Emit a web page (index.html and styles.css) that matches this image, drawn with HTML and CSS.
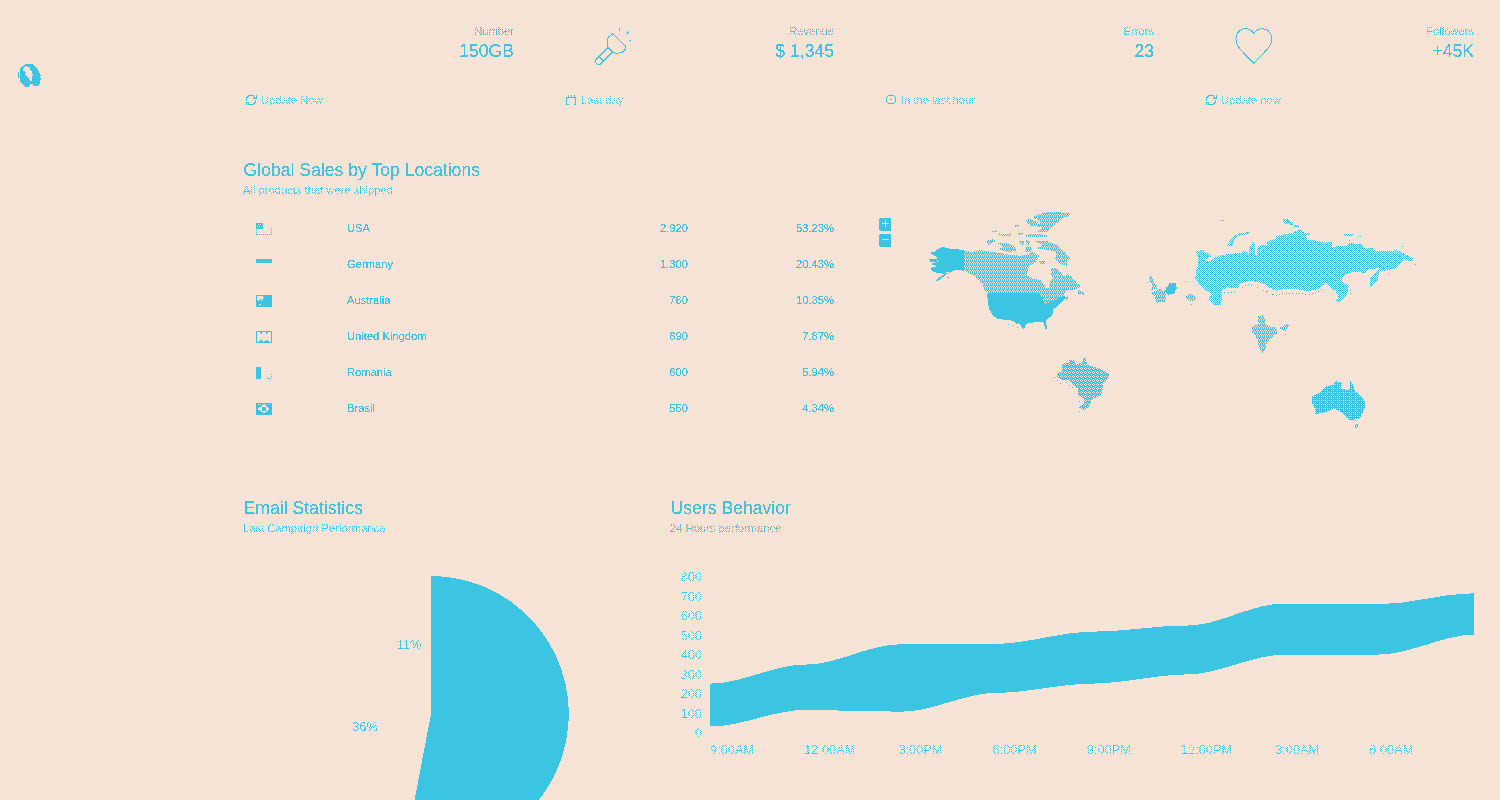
FILE: index.html
```html
<!DOCTYPE html>
<html lang="en">
<head>
<meta charset="utf-8">
<title>Dashboard</title>
<link rel="stylesheet" href="styles.css">
</head>
<body>
<svg class="defs" aria-hidden="true">
  <filter id="crisp" x="0" y="0" width="100%" height="100%" color-interpolation-filters="sRGB">
    <feComponentTransfer result="ink"><feFuncA type="linear" slope="50" intercept="-20"/></feComponentTransfer>
    <feFlood flood-color="#3cc4e3"/>
    <feComposite operator="in" in2="ink"/>
  </filter>
</svg>
<div class="app">
  <aside class="sidebar">
    <svg class="logo" width="24" height="24" viewBox="54 72 72 72"><path fill-rule="evenodd" d="M60 84L66 78 75 75V72H99V75L108 81 114 90 120 102V129L111 138H99V132H93L87 135V141H75L63 129 60 120ZM69 84V93L78 96 75 105 84 111 90 123H96V111L99 105 96 96 90 90V81H81V78H75ZM54 96H57V114H54ZM120 105H123V108H120ZM120 114H123V120H120Z"/></svg>
  </aside>
  <main class="main">
    <section class="stats">
      <article class="stat">
        <div class="stat-top"><span></span><div class="stat-text"><p class="small dither">Number</p><p class="value">150GB</p></div></div>
        <footer class="dither light"><svg width="12" height="12" viewBox="0 0 12 12"><path d="M1.500 6.500V4L4 1.500H8L10 4M11 1V4.500H8M10.500 6V8L8 10.500H4L2 8M1 11V8H4"/></svg><span class="small">Update Now</span></footer>
      </article>
      <article class="stat">
        <div class="stat-top"><svg class="stat-icon" width="38" height="40" viewBox="1095 50 114 120"><path d="M1147 70L1187 108V116L1178 125 1168 128H1154L1147 124 1134 111 1132 106V88L1136 80ZM1134 111L1107 138 1097 148V156L1102 163H1110L1121 152 1148 125M1107 138L1121 152M1168 54V62M1189 72L1197 64M1197 91H1203"/></svg><div class="stat-text"><p class="small dither">Revenue</p><p class="value">$ 1,345</p></div></div>
        <footer class="dither light"><svg width="12" height="12" viewBox="0 0 12 12"><path d="M1.500 11V3H10.500V11M3 1V3M6 1V4M9 1V3M2 10.500H4M9 10.500H11"/></svg><span class="small">Last day</span></footer>
      </article>
      <article class="stat">
        <div class="stat-top"><span></span><div class="stat-text"><p class="small dither">Errors</p><p class="value">23</p></div></div>
        <footer class="dither light"><svg width="12" height="12" viewBox="0 0 12 12"><circle cx="6" cy="5.500" r="4.500"/><path d="M5 5.500H7"/></svg><span class="small">In the last hour</span></footer>
      </article>
      <article class="stat">
        <div class="stat-top"><svg class="stat-icon" width="38" height="40" viewBox="255 50 114 120"><path d="M311 69L304 61C294 53 278 53 269 61C256 71 255 89 263 105C272 122 294 141 311 159C328 141 350 122 360 105C368 89 367 71 354 61C344 53 328 53 319 61Z"/></svg><div class="stat-text"><p class="small dither">Followers</p><p class="value">+45K</p></div></div>
        <footer class="dither light"><svg width="12" height="12" viewBox="0 0 12 12"><path d="M1.500 6.500V4L4 1.500H8L10 4M11 1V4.500H8M10.500 6V8L8 10.500H4L2 8M1 11V8H4"/></svg><span class="small">Update now</span></footer>
      </article>
    </section>

    <section class="sales">
      <h2>Global Sales by Top Locations</h2>
      <p class="small sub dither">All products that were shipped</p>
      <div class="sales-body">
        <table>
          <tr><td class="flag"><svg width="16" height="12" viewBox="0 0 16 12"><path fill-rule="evenodd" d="M0 0H7V6H0ZM1 3V4H2V3ZM2 1V2H3V1ZM3 3V4H4V3ZM4 1V2H5V1ZM5 3V4H6V3Z"/><path class="dots" d="M.5 7V12M1 11.500H16M15.500 5V11"/></svg></td><td class="country">USA</td><td class="num">2.920</td><td class="pct">53.23%</td></tr>
          <tr><td class="flag"><svg width="16" height="12" viewBox="0 0 16 12"><path d="M0 0H16V4H0Z"/></svg></td><td class="country">Germany</td><td class="num">1.300</td><td class="pct">20.43%</td></tr>
          <tr><td class="flag"><svg width="16" height="12" viewBox="0 0 16 12"><path fill-rule="evenodd" d="M0 0H16V12H0ZM1 1V5H2V6H3V5H4V4H5V6H6V5H7V3H8V2H7V1ZM3 9V10H5V9ZM11 2V3H12V2ZM13 3V4H14V3Z"/></svg></td><td class="country">Australia</td><td class="num">760</td><td class="pct">10.35%</td></tr>
          <tr><td class="flag"><svg width="16" height="12" viewBox="0 0 16 12"><path fill-rule="evenodd" d="M0 0H16V12H0ZM1 1V11H3V10H4V9H6V10H7V11H8V10H10V9H12V10H13V11H15V1H12V2H11V3H10V1H6V3H5V2H4V1Z"/></svg></td><td class="country">United Kingdom</td><td class="num">690</td><td class="pct">7.87%</td></tr>
          <tr><td class="flag"><svg width="16" height="12" viewBox="0 0 16 12"><path d="M0 0H5V12H0ZM11 10H12V12H11ZM13 11H15V12H13ZM15 9H16V10H15ZM15 7H16V8H15Z"/></svg></td><td class="country">Romania</td><td class="num">600</td><td class="pct">5.94%</td></tr>
          <tr><td class="flag"><svg width="16" height="12" viewBox="0 0 16 12"><path fill-rule="evenodd" d="M0 0H16V12H0ZM2 1V2H3V1ZM4 1V2H5V1ZM7 1V2H9V1ZM11 1V2H12V1ZM13 1V2H14V1ZM2 5V7H4V8H5V9H7V10H9V9H11V8H12V7H13V5H12V4H11V3H10V2H6V3H5V4H3V5ZM6 4H10V8H6Z"/></svg></td><td class="country">Brasil</td><td class="num">550</td><td class="pct">4.34%</td></tr>
        </table>
        <div class="map">
          <div class="zoom"><button aria-label="Zoom in"><svg width="12" height="13" viewBox="0 0 12 13"><path fill-rule="evenodd" d="M1 0H11L12 1V12L11 13H1L0 12V1ZM6 2V5H3V6H6V9H7V6H10V5H7V2Z"/></svg></button><button aria-label="Zoom out"><svg width="12" height="13" viewBox="0 0 12 13"><path fill-rule="evenodd" d="M1 0H11L12 1V12L11 13H1L0 12V1ZM3 5V6H10V5Z"/></svg></button></div>
          <svg class="world" width="520" height="230" viewBox="910 206 520 230">
            <defs>
              <pattern id="mid" width="4" height="4" patternUnits="userSpaceOnUse"><path d="M0 0h1v2h-1zM2 0h1v1h-1zM1 2h1v1h-1zM3 1h1v2h-1zM0 3h1v1h-1zM2 3h1v1h-1zM2 1h1v1h-1z"/></pattern>
              <pattern id="check" width="8" height="6" patternUnits="userSpaceOnUse"><path d="M0 0h1v1h-1zM2 0h1v1h-1zM4 0h1v1h-1zM6 0h1v1h-1zM1 1h1v1h-1zM3 1h1v1h-1zM5 1h1v1h-1zM7 1h1v1h-1zM0 2h1v1h-1zM2 2h1v1h-1zM4 2h1v1h-1zM6 2h1v1h-1zM1 3h1v1h-1zM3 3h1v1h-1zM5 3h1v1h-1zM7 3h1v1h-1zM0 4h1v1h-1zM2 4h1v1h-1zM4 4h1v1h-1zM6 4h1v1h-1zM1 5h1v1h-1zM3 5h1v1h-1zM5 5h1v1h-1zM7 5h1v1h-1zM3 2h1v1h-1zM7 4h1v1h-1z"/></pattern>
              <pattern id="dense" width="4" height="4" patternUnits="userSpaceOnUse"><path d="M1 0h1v1h-1zM3 0h1v1h-1zM0 1h1v1h-1zM2 1h2v1h-2zM0 2h1v1h-1zM1 2h1v1h-1zM2 2h1v1h-1zM0 3h1v1h-1zM2 3h2v1h-2z"/></pattern>
              <pattern id="heavy" width="6" height="4" patternUnits="userSpaceOnUse"><path d="M0 0h1v1h-1zM2 0h1v1h-1zM4 0h1v1h-1zM0 1h6v1h-6zM0 2h1v1h-1zM2 2h2v1h-2zM4 2h1v1h-1zM0 3h6v1h-6z"/></pattern>
              <clipPath id="canada"><path transform="translate(910 200) scale(.33333333)" d="M162 153L185 156 210 150 232 154 262 158 300 164 330 168 350 164 365 156 388 168 376 186 358 196 352 212 352 228 370 236 390 240 402 250 406 264 416 264 420 244 430 236 424 222 424 206 436 204 452 216 462 228 476 222 488 234 500 246 512 260 500 268 470 270 460 284 466 292 440 304 402 312 396 296 384 284 360 278 236 278 224 274 218 252 205 238 185 222 162 212ZM348 62L360 56 372 62 384 68 376 78 360 76ZM368 50L400 38 440 36 486 42 464 52 440 70 420 86 410 96 384 96 395 82 376 80 392 66ZM376 124L410 124 440 136 462 156 482 176 470 180 472 198 450 192 436 178 440 160 420 150 404 148 378 146 396 136ZM262 130L290 128 310 138 322 152 290 156 266 146 278 140ZM230 122L250 116 256 124 236 136ZM244 96L258 90 262 96ZM264 100L284 104 304 98 304 108H274ZM324 98H340V106H326ZM348 104L384 102 410 106V112H350ZM326 124L344 122 336 136ZM346 120L360 124V136L350 134ZM350 138L366 144 362 156 346 154ZM316 76H328V80H316ZM502 272L512 270 524 284 504 282ZM388 184H404V192H390ZM464 288L476 294 474 302 462 296Z"/></clipPath>
              <clipPath id="russia"><path transform="translate(1130 200) scale(.33333333)" d="M198 156L215 150 245 168 226 178 222 184 240 184 250 174 290 162 330 160 345 152 358 160 364 172 356 146 368 126 374 128 374 160 380 168 384 138 410 134 414 122 436 118 440 108 490 98 506 88 524 98 542 98 540 106 526 106 532 120 560 122 582 128 604 124 606 140 650 138 656 130 690 132 704 146 730 144 736 152 778 154 800 150 818 158 850 176 846 184 820 178 808 196 792 206 756 214 746 216 744 240 722 262 718 240 726 226 744 212 752 204 720 206 704 220 680 214 650 222 634 238 640 248 656 256 654 278 638 298 624 308 616 304 626 288 616 272 600 262 588 248 570 266 530 274 500 266 470 266 440 272 420 264 396 248 360 242 330 250 326 264 290 262 272 274 276 290 272 314 254 314 236 296 244 280 222 268 208 250 196 238 198 210 206 190 204 172ZM290 138L300 122 314 108 330 100 356 96 354 101 332 106 316 114 306 138ZM458 58L474 56 490 70 486 76 462 70ZM492 76H506V82H492ZM642 102H668V109H642ZM684 108H692V112H684Z"/></clipPath>
              <clipPath id="others"><path transform="translate(1130 200) scale(.33333333)" d="M58 226L66 230 68 242 78 252 84 266 62 270 66 256 58 242ZM64 278L90 268 106 276 108 304 78 308 74 288ZM166 290L176 282 192 284 198 298 184 304 172 300ZM384 348L398 346 406 364 406 374 438 384 442 398 424 414 410 430 400 460H394L382 424 376 404 364 396 368 380 386 372ZM442 384L456 382 470 372 476 376 466 394 456 388Z"/></clipPath>
              <clipPath id="brazil"><path transform="translate(1040 340) scale(.33333333)" d="M52 98L66 94V72L88 68V60H104V74L128 68V54H136L142 76 160 80 188 90 207 102 204 114 190 128 186 158 176 170 156 176 148 198 136 210 120 206 118 200 134 188 130 174 114 164V146L102 136 84 120 62 118 52 110Z"/></clipPath>
              <clipPath id="australia"><path transform="translate(1040 340) scale(.33333333)" d="M816 170L840 158 860 138 880 136 888 124 906 128 902 144 924 152 930 140V124H934L944 152 960 168 974 182V204L958 236 928 240 916 226 898 212 882 206 850 218 824 222 826 206 816 190Z"/></clipPath>
            </defs>
            <rect x="910" y="206" width="200" height="110" fill="url(#mid)" clip-path="url(#canada)"/>
            <rect x="1180" y="206" width="250" height="110" fill="url(#check)" clip-path="url(#russia)"/>
            <rect x="1140" y="260" width="200" height="110" fill="url(#mid)" clip-path="url(#others)"/>
            <rect x="1040" y="350" width="100" height="80" fill="url(#dense)" clip-path="url(#brazil)"/>
            <rect x="1300" y="370" width="100" height="60" fill="url(#heavy)" clip-path="url(#australia)"/>
            <g transform="translate(910 200) scale(.33333333)">
              <path d="M60 155L74 155 80 148 98 140 118 146 162 150V212L135 210 120 218 112 216 102 222 92 220 70 216 62 208 68 202 82 198 72 196 62 192 74 188 84 184 82 178 80 170 66 164ZM57 177H80V185H60ZM120 216L108 224 88 240 72 246 88 232 104 222ZM110 230H117V234H110Z"/>
              <path d="M232 282L240 278H360L384 282 398 292 402 314 420 308 446 294 464 288V298L448 314 430 328V340L422 350 408 360 411 388H406L400 366 380 366 352 370 346 376 342 388 334 380 328 370 318 372 308 362 290 360 262 356 248 346 238 328 233 306ZM294 372h3v3h-3zM306 375h3v3h-3zM321 381h3v3h-3z"/>
            </g>
            <g transform="translate(1130 200) scale(.33333333)">
              <path d="M108 262L112 262 118 248H124V252L132 247 138 250V260H141V268L134 270 136 280 114 284 106 274ZM165 243h3v3h-3zM183 312h3v3h-3zM273 60h3v3h-3zM279 60h3v3h-3zM816 138h3v3h-3zM855 192h3v3h-3zM657 120h3v3h-3zM51 246h3v3h-3zM465 402h3v3h-3z"/>
              <path class="border" d="M273 277H324M336 262L354 253 378 259 396 268 420 279 438 286 465 280H504L540 284 564 275 582 262M660 270V290"/>
            </g>
            <g transform="translate(1040 340) scale(.33333333)">
              <path d="M42 111h3v3h-3zM51 120h3v3h-3zM60 129h3v3h-3zM78 126h3v3h-3zM87 135h3v3h-3zM96 141h3v3h-3zM117 183h3v3h-3zM117 213h3v3h-3zM945 240h3v3h-3zM945 255h3v9h-3zM948 261h3v3h-3zM948 252h6v3h-6zM951 255h3v6h-3z"/>
            </g>
          </svg>
        </div>
      </div>
    </section>

    <section class="charts">
      <article class="email">
        <h2>Email Statistics</h2>
        <p class="small sub dither">Last Campaign Performance</p>
        <svg class="pie" width="377" height="240" viewBox="243 560 377 240"><path d="M431 714V576A138 138 0 1 1 405.100 849.600Z"/><g class="dither"><text x="409" y="649">11%</text><text x="365" y="731">36%</text></g></svg>
      </article>
      <article class="users">
        <h2>Users Behavior</h2>
        <p class="small sub dither">24 Hours performance</p>
        <div class="plot">
          <div class="yaxis dither light"><span>800</span><span>700</span><span>600</span><span>500</span><span>400</span><span>300</span><span>200</span><span>100</span><span>0</span></div>
          <svg width="764" height="172" viewBox="710 567.500 764 172"><path d="M710 684.200C742 684.200 773.500 665.100 805.500 665.100S869 644.700 901 644.700S964.500 644.300 996.500 644.300S1060 632.200 1092 632.200S1155.500 626 1187.500 626S1251 604.200 1283 604.200S1346.500 604.800 1378.500 604.800S1442 593.700 1474 593.700V635.200C1442 635.200 1410.500 655 1378.500 655S1315 655.400 1283 655.400S1219.500 674.800 1187.500 674.800S1124 684.200 1092 684.200S1028.500 693.300 996.500 693.300S933 712.200 901 712.200S837.500 710.400 805.500 710.400S742 727 710 727Z"/></svg>
        </div>
        <div class="xaxis dither light"><span>9:00AM</span><span>12:00AM</span><span>3:00PM</span><span>6:00PM</span><span>9:00PM</span><span>12:00PM</span><span>3:00AM</span><span>6:00AM</span></div>
      </article>
    </section>
  </main>
</div>
</body>
</html>
```
FILE: styles.css
```css
* { box-sizing: border-box; margin: 0; padding: 0; }
body {
  width: 1500px;
  height: 800px;
  overflow: hidden;
  background: #f7e4d6;
  color: #3cc4e3;
  font-family: "Liberation Sans", Arial, sans-serif;
}
.defs { position: absolute; width: 0; height: 0; }
svg { display: block; fill: #3cc4e3; shape-rendering: crispEdges; }

/* Two-tone rendering: solid ink, with lighter text thinned by a checkered mask */
.app { display: flex; width: 1500px; height: 800px; overflow: hidden; filter: url(#crisp); }
.dither {
  mask-image: repeating-conic-gradient(#000 0 25%, rgba(0, 0, 0, .47) 0 50%);
  mask-size: 2px 2px;
}
.light { mask-image: repeating-conic-gradient(#000 0 25%, rgba(0, 0, 0, .42) 0 50%); }
.sidebar { flex: 0 0 243px; padding: 64px 0 0 18px; }
.main { flex: 1; min-width: 0; padding-right: 26px; }
.small { font-size: 11.2px; line-height: 16px; }
h2 { padding-left: .6px; font-size: 17.6px; font-weight: 400; line-height: 24px; white-space: nowrap; }

.stats { display: grid; grid-template-columns: repeat(4, 270px); gap: 50px; height: 158px; padding-left: 1px; }
.stat { padding-top: 23px; }
.stat-top { display: flex; justify-content: space-between; height: 68px; }
.stat-text { text-align: right; }
.value { font-size: 17.6px; line-height: 24px; }
.stat-icon { margin: 4px 0 0 31px; fill: none; stroke: #3cc4e3; stroke-width: 3; }
.stat footer { display: flex; align-items: center; gap: 4px; height: 17px; padding-left: 1px; }
.stat footer svg { fill: none; stroke: #3cc4e3; }

.sales { height: 338px; }
.sales-body { display: flex; align-items: flex-start; padding-top: 8px; }
table { width: 591px; margin-top: 4px; border-collapse: collapse; font-size: 11.2px; table-layout: fixed; }
tr { height: 36px; }
td { vertical-align: middle; }
.flag { width: 104px; padding-left: 13px; }
.flag svg { margin-top: 2px; }
.dots { fill: none; stroke: #3cc4e3; stroke-dasharray: 1 1; }
.country { width: 200px; }
.num { width: 141px; text-align: right; }
.pct { width: 146px; text-align: right; }
.map { display: flex; margin-left: 45px; gap: 19px; }
.zoom { display: flex; flex-direction: column; gap: 3px; padding-top: 12px; }
.zoom button { width: 12px; height: 13px; border: 0; background: none; }
.border { fill: none; stroke: #3cc4e3; stroke-width: 3; stroke-dasharray: 3 7; }

.charts { display: flex; }
.email { width: 427px; }
.pie { margin-top: 24px; }
text { font-size: 12.8px; text-anchor: middle; }
.users { width: 804px; }
.plot { display: flex; padding-top: 31px; }
.yaxis { display: flex; flex-direction: column; width: 32px; margin-right: 8px; text-align: right; font-size: 12.8px; }
.yaxis span { height: 19.500px; line-height: 19px; }
.xaxis { display: flex; width: 764px; margin: -2px 0 0 40px; font-size: 12.8px; line-height: 17px; }
.xaxis span { flex: 0 0 94.200px; }
```
